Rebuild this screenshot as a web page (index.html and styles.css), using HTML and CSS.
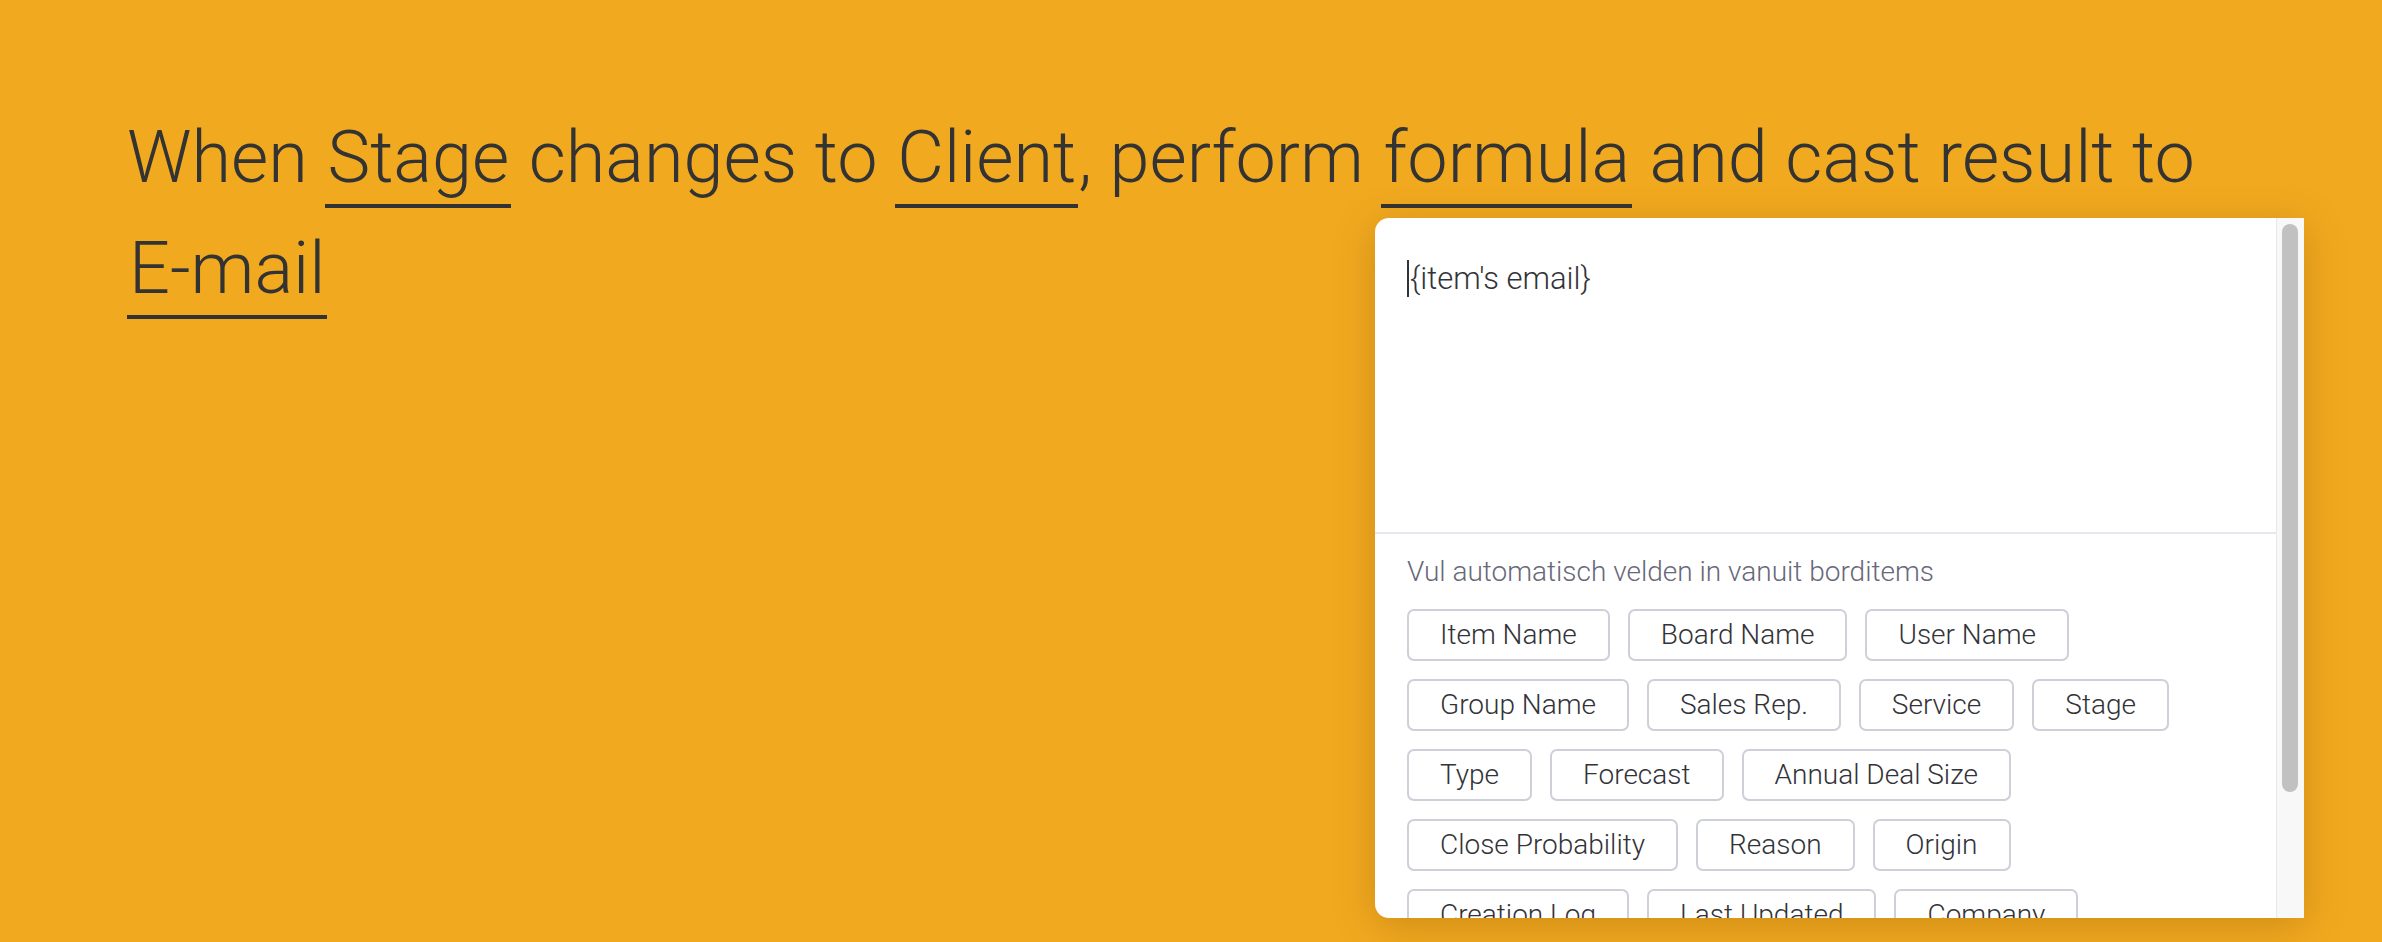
FILE: index.html
```html
<!DOCTYPE html>
<html lang="en">
<head>
<meta charset="utf-8">
<title>Automation recipe</title>
<link rel="stylesheet" href="styles.css">
</head>
<body>
<main class="page">
  <p class="sentence">When <span class="field">Stage</span> changes to <span class="field">Client</span>, perform <span class="field">formula</span> and cast result to <span class="field">E-mail</span></p>

  <div class="popup">
    <div class="popup-main">
      <div class="editor"><span class="caret"></span>{item's email}</div>
      <div class="fill">
        <div class="fill-label">Vul automatisch velden in vanuit borditems</div>
        <div class="chips">
          <span class="chip">Item Name</span>
          <span class="chip">Board Name</span>
          <span class="chip">User Name</span>
          <span class="chip">Group Name</span>
          <span class="chip">Sales Rep.</span>
          <span class="chip">Service</span>
          <span class="chip">Stage</span>
          <span class="chip">Type</span>
          <span class="chip">Forecast</span>
          <span class="chip">Annual Deal Size</span>
          <span class="chip">Close Probability</span>
          <span class="chip">Reason</span>
          <span class="chip">Origin</span>
          <span class="chip">Creation Log</span>
          <span class="chip">Last Updated</span>
          <span class="chip">Company</span>
        </div>
      </div>
    </div>
    <div class="scrolltrack"><div class="scrollthumb"></div></div>
  </div>
</main>
</body>
</html>
```

FILE: styles.css
```css
html, body {
  margin: 0;
  padding: 0;
}

body {
  background: #f1a91f;
  font-family: Roboto, "Noto Sans", "Liberation Sans", sans-serif;
  width: 2382px;
  height: 942px;
  overflow: hidden;
}

.page {
  position: relative;
  height: 942px;
  box-sizing: border-box;
  padding: 102px 127px 0 127px;
}

.sentence {
  margin: 0;
  font-size: 72px;
  line-height: 111px;
  font-weight: 300;
  color: #333333;
}

.field {
  padding: 0 2px 4px;
  border-bottom: 4px solid #333333;
}

.popup {
  position: absolute;
  left: 1375px;
  top: 218px;
  width: 929px;
  height: 700px;
  display: flex;
  background: #ffffff;
  border-radius: 14px 0 0 14px;
  overflow: hidden;
  box-shadow: 0 8px 40px rgba(120, 70, 0, 0.28);
}

.popup-main {
  flex: 1;
  min-width: 0;
}

.editor {
  height: 316px;
  box-sizing: border-box;
  padding: 40px 32px 0;
  font-size: 31px;
  line-height: 42px;
  font-weight: 300;
  color: #323338;
  border-bottom: 2px solid #e6e9ef;
}

.caret {
  display: inline-block;
  width: 2px;
  height: 37px;
  background: #323338;
  vertical-align: -8px;
  margin-right: 1px;
}

.fill {
  padding: 21px 32px 0 32px;
}

.fill-label {
  font-size: 28px;
  line-height: 34px;
  font-weight: 300;
  color: #676879;
  margin-bottom: 20px;
}

.chips {
  display: flex;
  flex-wrap: wrap;
  gap: 18px;
}

.chip {
  display: inline-block;
  box-sizing: border-box;
  height: 52px;
  padding: 0 31px;
  border: 2px solid #cdd0d9;
  border-radius: 7px;
  font-size: 28px;
  line-height: 48px;
  font-weight: 300;
  color: #323338;
  white-space: nowrap;
}

.scrolltrack {
  width: 28px;
  flex: none;
  box-sizing: border-box;
  background: #f8f8f8;
  border-left: 1px solid #e8e8e8;
  padding: 6px 0 0 5px;
}

.scrollthumb {
  width: 16px;
  height: 568px;
  border-radius: 8px;
  background: #c1c1c1;
}
```
